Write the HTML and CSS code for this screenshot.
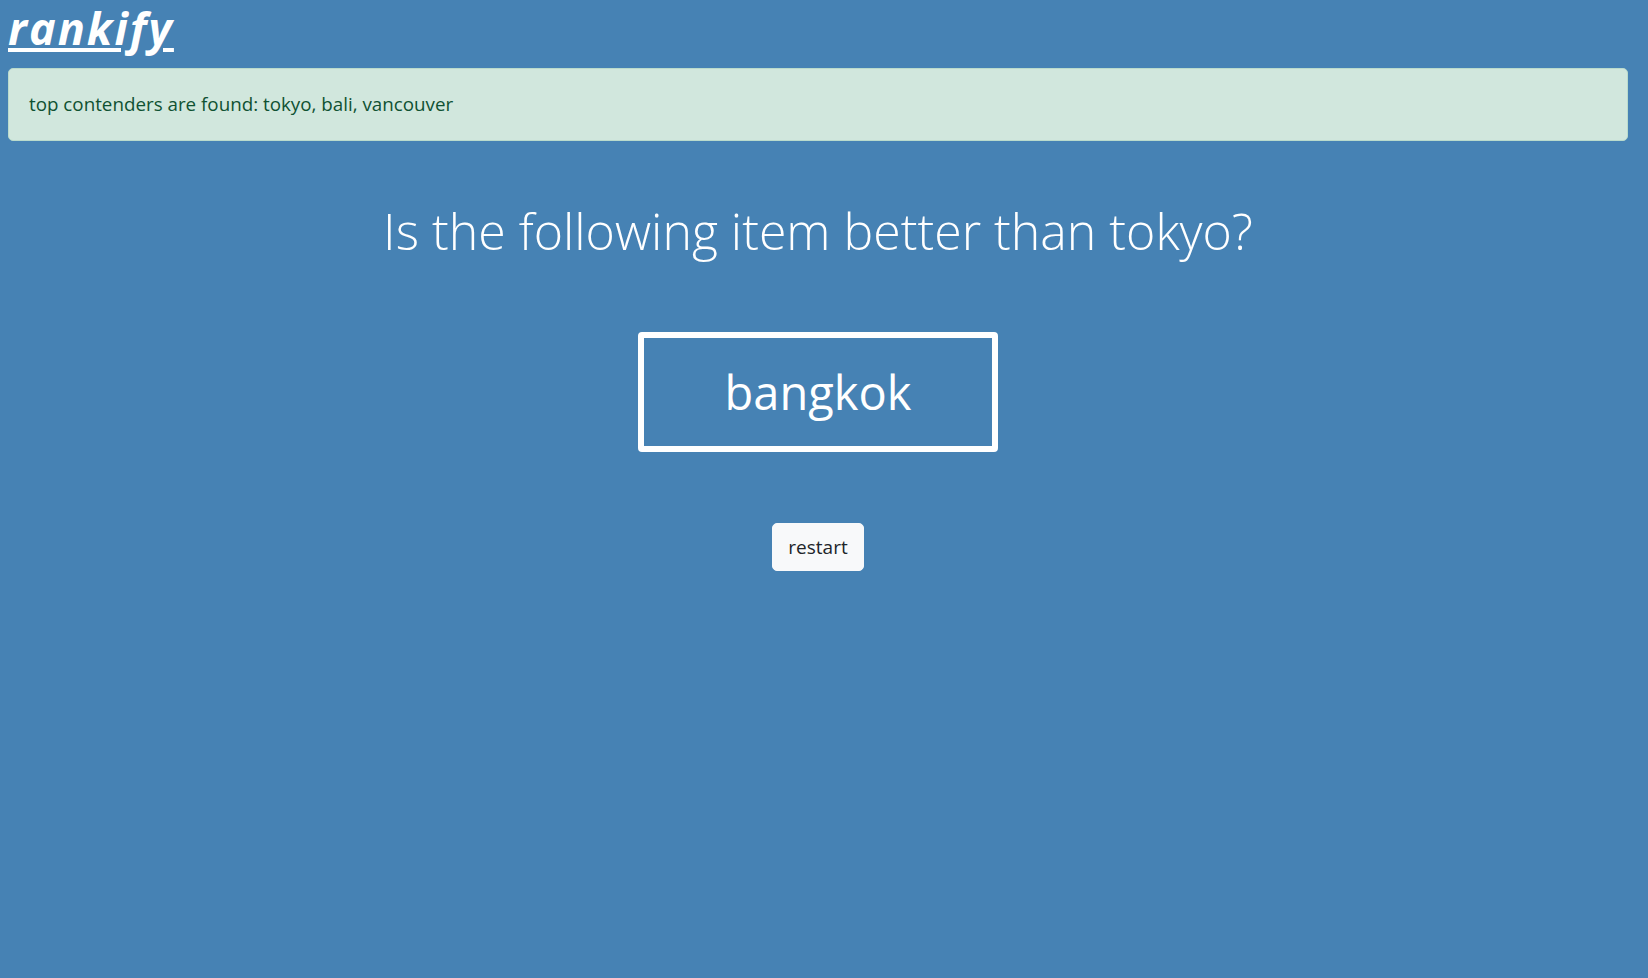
FILE: index.html
```html
<!DOCTYPE html>
<html lang="en">
<head>
<meta charset="utf-8">
<title>rankify</title>
<link rel="stylesheet" href="styles.css">
</head>
<body>
<div class="app">
  <header class="header">
    <a class="logo" href="#">rankify</a>
  </header>
  <div class="alert">top contenders are found: tokyo, bali, vancouver</div>
  <main class="main">
    <h2 class="question">Is the following item better than tokyo?</h2>
    <div class="item">bangkok</div>
    <button class="restart" type="button">restart</button>
  </main>
</div>
</body>
</html>
```
FILE: styles.css
```css
html, body {
  margin: 0;
  padding: 0;
  background: #4682b4;
  min-height: 100%;
}
body {
  font-family: "Open Sans", "Noto Sans", sans-serif;
  color: #fff;
}
.app {
  display: flex;
  flex-direction: column;
  padding: 0 20px 0 8px;
}
.header {
  height: 68px;
  display: flex;
  align-items: flex-start;
}
.logo {
  color: #fff;
  font-size: 45px;
  font-weight: 700;
  font-style: italic;
  line-height: 56px;
  text-decoration: underline;
  text-decoration-thickness: 4px;
  text-underline-offset: 3px;
  letter-spacing: 2px;
}
.alert {
  background: #d1e7dd;
  color: #0f5132;
  border: 1px solid #badbcc;
  border-radius: 5px;
  padding: 22px 20px;
  font-size: 18.8px;
  line-height: 27px;
}
.main {
  display: flex;
  flex-direction: column;
  align-items: center;
}
.question {
  margin: 57px 0 0;
  font-size: 50px;
  font-weight: 300;
  line-height: 66px;
}
.item {
  margin-top: 68px;
  width: 348px;
  height: 108px;
  border: 6px solid #fff;
  border-radius: 4px;
  display: flex;
  align-items: center;
  justify-content: center;
  font-size: 47px;
  font-weight: 400;
}
.restart {
  margin-top: 71px;
  width: 92px;
  height: 48px;
  background: #f8f9fa;
  color: #212529;
  border: 1px solid #f8f9fa;
  border-radius: 5px;
  font-family: inherit;
  font-size: 19px;
  padding: 0;
}
```
